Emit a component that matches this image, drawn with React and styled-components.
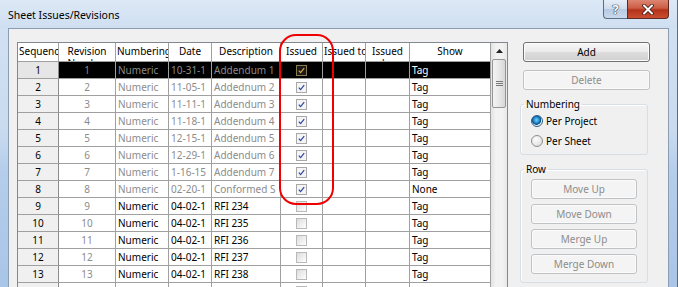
import styled, { createGlobalStyle } from 'styled-components';

const GlobalStyle = createGlobalStyle`
  body {
    margin: 0;
    background: #fff;
    font-family: "Noto Sans", "Segoe UI", sans-serif;
  }
`;

const columns = [41, 57, 53, 43, 69, 42, 43, 44, 81];
const template = columns.map((w) => `${w}px`).join(' ');

// nowrap: the dialog draws these on one line even when they spill over
const headers = [
  { label: 'Sequence' },
  { label: 'Revision Number' },
  { label: 'Numbering' },
  { label: 'Date' },
  { label: 'Description' },
  { label: 'Issued' },
  { label: 'Issued to', nowrap: true },
  { label: 'Issued by' },
  { label: 'Show' },
];

const rows = [
  { seq: 1, date: '10-31-14', desc: 'Addendum 1', issued: true, show: 'Tag' },
  { seq: 2, date: '11-05-14', desc: 'Addednum 2', issued: true, show: 'Tag' },
  { seq: 3, date: '11-11-14', desc: 'Addendum 3', issued: true, show: 'Tag' },
  { seq: 4, date: '11-18-14', desc: 'Addendum 4', issued: true, show: 'Tag' },
  { seq: 5, date: '12-15-14', desc: 'Addendum 5', issued: true, show: 'Tag' },
  { seq: 6, date: '12-29-14', desc: 'Addendum 6', issued: true, show: 'Tag' },
  { seq: 7, date: '1-16-15', desc: 'Addendum 7', issued: true, show: 'Tag' },
  { seq: 8, date: '02-20-15', desc: 'Conformed Set', issued: true, show: 'None' },
  { seq: 9, date: '04-02-15', desc: 'RFI 234', issued: false, show: 'Tag' },
  { seq: 10, date: '04-02-15', desc: 'RFI 235', issued: false, show: 'Tag' },
  { seq: 11, date: '04-02-15', desc: 'RFI 236', issued: false, show: 'Tag' },
  { seq: 12, date: '04-02-15', desc: 'RFI 237', issued: false, show: 'Tag' },
  { seq: 13, date: '04-02-15', desc: 'RFI 238', issued: false, show: 'Tag' },
  { seq: 14, date: '04-02-15', desc: 'RFI 239', issued: false, show: 'Tag' },
];

const Window = styled.div`
  position: relative;
  width: 677px;
  height: 287px;
  overflow: hidden;
  border-right: 1px solid #5d6b7c;
  background: linear-gradient(180deg, #d3e2f3 0%, #cadbef 45%, #b4cdea 60%, #a9c5e7 100%);
`;

const TitleBar = styled.div`
  height: 28px;
  display: flex;
  justify-content: space-between;
  align-items: flex-start;
  background: linear-gradient(180deg, #dce8f6 0%, #cfdff1 100%);
`;

const Title = styled.div`
  padding: 8px 0 0 8px;
  font-size: 10.5px;
  line-height: 15px;
  color: #000;
`;

const Caption = styled.div`
  display: flex;
  margin-right: 8px;
`;

const HelpButton = styled.div`
  width: 24px;
  height: 19px;
  box-sizing: border-box;
  border: 1px solid #5b6d86;
  border-top: none;
  border-right: none;
  border-radius: 0 0 0 4px;
  background: linear-gradient(180deg, #e6eef8 0%, #cfdcec 50%, #b7cae2 51%, #c9d9ed 100%);
  color: #ffffff;
  font-weight: 700;
  font-size: 13px;
  line-height: 18px;
  text-align: center;
  text-shadow: 0 0 1px #223044, 0 0 1px #223044, 0 0 1px #223044;
`;

const CloseButton = styled.div`
  width: 42px;
  height: 19px;
  box-sizing: border-box;
  border: 1px solid #5e2a22;
  border-top: none;
  border-radius: 0 0 4px 0;
  background: linear-gradient(180deg, #dd8672 0%, #cc5d44 45%, #b5321a 55%, #c94e31 100%);
  display: flex;
  align-items: center;
  justify-content: center;
`;

const Frame = styled.div`
  height: 259px;
  padding: 0 8px;
`;

const Client = styled.div`
  height: 100%;
  box-sizing: border-box;
  border: 1px solid #8a9db3;
  border-bottom: none;
  background: #f0f0f0;
  padding: 13px 0 0 8px;
  display: flex;
  align-items: flex-start;
`;

const GridBox = styled.div`
  display: flex;
  border: 1px solid #828790;
  background: #fff;
`;

const Grid = styled.div`
  display: grid;
  grid-template-columns: ${template};
  grid-auto-rows: 17px;
  grid-template-rows: 19px;
  font-size: 10px;
`;

const HeaderCell = styled.div`
  box-sizing: border-box;
  height: 19px;
  padding: 2px 1px 0;
  border-right: 1px solid #a0a0a0;
  border-bottom: 1px solid #a0a0a0;
  background: #fff;
  line-height: 12px;
  text-align: center;
  white-space: ${(p) => (p.$nowrap ? 'nowrap' : 'normal')};
  overflow: hidden;
  color: #000;
`;

const RowHeader = styled.div`
  box-sizing: border-box;
  border-right: 1px solid #8c8c8c;
  border-bottom: 1px solid #a0a0a0;
  background: ${(p) => (p.$selected ? '#e6e6e6' : '#f0f0f0')};
  line-height: 16px;
  text-align: center;
  color: #000;
  overflow: hidden;
`;

const Cell = styled.div`
  box-sizing: border-box;
  padding: 0 2px;
  border-right: 1px solid #a0a0a0;
  border-bottom: 1px solid #a0a0a0;
  line-height: 16px;
  overflow: hidden;
  word-break: break-all;
  text-align: ${(p) => (p.$center ? 'center' : 'left')};
  background: ${(p) => (p.$selected ? '#000' : '#fff')};
  color: ${(p) => {
    if (p.$selected) return p.$muted ? '#8a8a8a' : '#fff';
    return p.$muted ? '#8c8c8c' : '#000';
  }};
`;

const CheckCell = styled(Cell)`
  display: flex;
  align-items: center;
  justify-content: center;
`;

const Box = styled.span`
  width: 11px;
  height: 11px;
  box-sizing: border-box;
  display: flex;
  align-items: center;
  justify-content: center;
  border: 1px solid ${(p) => (p.$selected ? '#8a7a50' : p.$checked ? '#a8a8a8' : '#b9b9b9')};
  background: ${(p) =>
    p.$selected ? '#1a1a1a' : p.$checked ? '#f4f4f4' : 'linear-gradient(135deg, #dcdcdc 0%, #f4f4f4 70%, #fff 100%)'};
`;

const ScrollBar = styled.div`
  width: 16px;
  display: flex;
  flex-direction: column;
  background: linear-gradient(90deg, #e3e3e3 0%, #f2f2f2 30%, #f2f2f2 70%, #e8e8e8 100%);
`;

const ArrowButton = styled.div`
  height: 16px;
  display: flex;
  align-items: center;
  justify-content: center;
`;

const Thumb = styled.div`
  height: 49px;
  margin: 0 1px;
  box-sizing: border-box;
  border: 1px solid #959595;
  border-radius: 2px;
  background: linear-gradient(90deg, #f3f3f3 0%, #e8e8e8 50%, #d6d6d6 100%);
  display: flex;
  align-items: center;
  justify-content: center;
`;

const Side = styled.div`
  margin-left: 12px;
  width: 130px;
  display: flex;
  flex-direction: column;
  font-size: 10px;
`;

const Button = styled.div`
  box-sizing: border-box;
  height: 20px;
  width: ${(p) => p.$width}px;
  margin-left: ${(p) => p.$indent || 0}px;
  margin-top: ${(p) => p.$top || 0}px;
  border: 1px solid ${(p) => (p.$disabled ? '#bfc3c6' : '#707070')};
  border-radius: 3px;
  background: ${(p) =>
    p.$disabled
      ? '#f4f4f4'
      : 'linear-gradient(180deg, #f6f6f6 0%, #ebebeb 48%, #dddddd 52%, #cfcfcf 100%)'};
  box-shadow: inset 0 0 0 1px ${(p) => (p.$disabled ? '#fbfbfb' : '#fcfcfc')};
  color: ${(p) => (p.$disabled ? '#8d8d8d' : '#000')};
  line-height: 18px;
  text-align: center;
`;

const Group = styled.fieldset`
  margin: 7px 0 0;
  padding: 1px 0 ${(p) => p.$bottom}px 10px;
  width: 128px;
  box-sizing: border-box;
  border: 1px solid #d5dfe5;
  border-radius: 3px;
  box-shadow: inset 1px 1px 0 #fff;
  display: flex;
  flex-direction: column;
  gap: ${(p) => p.$gap}px;
`;

const Legend = styled.legend`
  margin-left: -7px;
  padding: 0 2px;
  line-height: 14px;
  color: #000;
`;

const RadioRow = styled.label`
  display: flex;
  align-items: center;
  gap: 3px;
  height: 18px;
  color: #000;
`;

const RadioDot = styled.span`
  width: 12px;
  height: 12px;
  box-sizing: border-box;
  border-radius: 50%;
  border: 1px solid ${(p) => (p.$checked ? '#2c5f88' : '#8e8f8f')};
  background: ${(p) =>
    p.$checked
      ? 'radial-gradient(circle at 45% 40%, #7fd2f7 0%, #1f8cd0 35%, #0d4c85 55%, #e8eef3 62%, #f4f4f4 100%)'
      : 'radial-gradient(circle at 40% 35%, #fdfdfd 0%, #e6e6e6 60%, #cfcfcf 100%)'};
`;

const Annotation = styled.div`
  position: absolute;
  left: 279px;
  top: 34px;
  width: 55px;
  height: 171px;
  box-sizing: border-box;
  border: 2px solid #f00000;
  border-radius: 17px;
  pointer-events: none;
`;

function Check({ checked, selected }) {
  return (
    <Box $checked={checked} $selected={selected}>
      {checked && (
        <svg width="9" height="9" viewBox="0 0 9 9">
          <path d="M1.8 4.6 L3.6 6.6 L7.2 2.2" fill="none" stroke={selected ? '#d9a93a' : '#2b47a0'} strokeWidth="1.2" />
        </svg>
      )}
    </Box>
  );
}

function Radio({ checked, children }) {
  return (
    <RadioRow>
      <RadioDot $checked={checked} />
      {children}
    </RadioRow>
  );
}

export default function App() {
  return (
    <>
      <GlobalStyle />
      <Window>
        <TitleBar>
          <Title>Sheet Issues/Revisions</Title>
          <Caption>
            <HelpButton>?</HelpButton>
            <CloseButton>
              <svg width="14" height="11" viewBox="0 0 14 11">
                <path d="M3 1.5 L11 9.5 M11 1.5 L3 9.5" stroke="#3e1710" strokeWidth="3.6" strokeLinecap="round" />
                <path d="M3 1.5 L11 9.5 M11 1.5 L3 9.5" stroke="#fff" strokeWidth="2" strokeLinecap="round" />
              </svg>
            </CloseButton>
          </Caption>
        </TitleBar>
        <Frame>
          <Client>
            <GridBox>
              <Grid>
                {headers.map((h) => (
                  <HeaderCell key={h.label} $nowrap={h.nowrap}>{h.label}</HeaderCell>
                ))}
                {rows.map((r) => {
                  const sel = r.seq === 1;
                  return [
                    <RowHeader key={`s${r.seq}`} $selected={sel}>{r.seq}</RowHeader>,
                    <Cell key={`r${r.seq}`} $center $muted $selected={sel}>{r.seq}</Cell>,
                    <Cell key={`n${r.seq}`} $muted={r.issued} $selected={sel}>Numeric</Cell>,
                    <Cell key={`d${r.seq}`} $muted={r.issued} $selected={sel}>{r.date}</Cell>,
                    <Cell key={`e${r.seq}`} $muted={r.issued} $selected={sel}>{r.desc}</Cell>,
                    <CheckCell key={`i${r.seq}`} $selected={sel}>
                      <Check checked={r.issued} selected={sel} />
                    </CheckCell>,
                    <Cell key={`t${r.seq}`} $selected={sel} />,
                    <Cell key={`b${r.seq}`} $selected={sel} />,
                    <Cell key={`w${r.seq}`} $selected={sel}>{r.show}</Cell>,
                  ];
                })}
              </Grid>
              <ScrollBar>
                <ArrowButton>
                  <svg width="7" height="4" viewBox="0 0 7 4">
                    <path d="M0 4 L3.5 0 L7 4 Z" fill="#222" />
                  </svg>
                </ArrowButton>
                <Thumb>
                  <svg width="7" height="6" viewBox="0 0 7 6">
                    <path d="M0 0.5 H7 M0 2.5 H7 M0 4.5 H7" stroke="#7a7a7a" strokeWidth="1" />
                  </svg>
                </Thumb>
              </ScrollBar>
            </GridBox>
            <Side>
              <Button $width={127} $indent={3}>Add</Button>
              <Button $width={127} $indent={3} $top={8} $disabled>Delete</Button>
              <Group $gap={2} $bottom={4}>
                <Legend>Numbering</Legend>
                <Radio checked>Per Project</Radio>
                <Radio>Per Sheet</Radio>
              </Group>
              <Group $gap={5} $bottom={8}>
                <Legend>Row</Legend>
                <Button $width={106} $top={2} $disabled>Move Up</Button>
                <Button $width={106} $disabled>Move Down</Button>
                <Button $width={106} $disabled>Merge Up</Button>
                <Button $width={106} $disabled>Merge Down</Button>
              </Group>
            </Side>
          </Client>
        </Frame>
        <Annotation />
      </Window>
    </>
  );
}
